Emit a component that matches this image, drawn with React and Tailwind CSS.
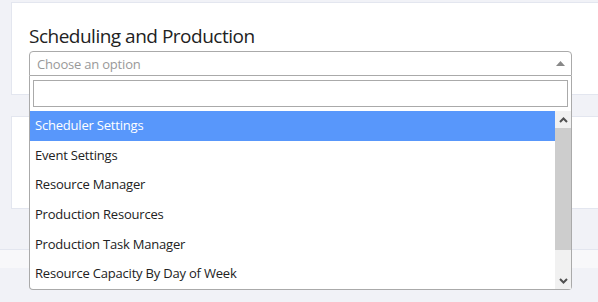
import React from "react";

const options = [
  "Scheduler Settings",
  "Event Settings",
  "Resource Manager",
  "Production Resources",
  "Production Task Manager",
  "Resource Capacity By Day of Week",
];

export default function App() {
  return (
    <div className="relative w-[598px] h-[302px] overflow-hidden bg-[#f1f2f7] font-['Open_Sans',sans-serif]">
      <div className="pt-[2px] pl-[11px] w-[620px]">
        <div className="h-[93px] bg-white border border-[#e3e6ef] pl-[17px] pt-[19px]">
          <h1 className="text-[19px] leading-[28px] text-[#222] tracking-[-0.5px]">Scheduling and Production</h1>
          <div className="mt-[1px] w-[543px] h-[25px] border border-[#aaa] rounded-t-[4px] flex items-center justify-between pl-[7px] pr-[6px]">
            <span className="text-[13px] text-[#999] tracking-[-0.2px] pt-[2px]">Choose an option</span>
            <svg width="9" height="5" viewBox="0 0 9 5"><path d="M0 5 L4.5 0 L9 5 Z" fill="#888" /></svg>
          </div>
        </div>
        <div className="mt-[21px] h-[93px] bg-white border border-[#e3e6ef]"></div>
      </div>
      <div className="mt-[40px] h-[19px] bg-[#f8f8fa] border-t border-[#e3e6ef]"></div>

      <div className="absolute left-[29px] top-[76px] w-[543px] bg-white border border-t-0 border-[#aaa] rounded-b-[4px]">
        <div className="px-[3px] pt-[4px] pb-[4px]">
          <div className="h-[27px] border border-[#aaa] bg-white"></div>
        </div>
        <div className="flex h-[178px]">
          <div className="w-[525px]">
            {options.map((o, i) => (
              <div
                key={o}
                className={
                  i === 0
                    ? "h-[29.67px] flex items-center pl-[5px] text-[13px] tracking-[-0.2px] bg-[#5897fb] text-white"
                    : "h-[29.67px] flex items-center pl-[5px] text-[13px] tracking-[-0.2px] text-[#222]"
                }
              >
                {o}
              </div>
            ))}
          </div>
          <div className="w-[16px] flex flex-col bg-[#f1f1f1]">
            <div className="h-[17px] flex items-center justify-center">
              <svg width="9" height="6" viewBox="0 0 9 6"><path d="M1 5 L4.5 1.5 L8 5" stroke="#505050" strokeWidth="2" fill="none" /></svg>
            </div>
            <div className="h-[122px] bg-[#cdcdcd]"></div>
            <div className="flex-1"></div>
            <div className="h-[17px] flex items-center justify-center">
              <svg width="9" height="6" viewBox="0 0 9 6"><path d="M1 1 L4.5 4.5 L8 1" stroke="#505050" strokeWidth="2" fill="none" /></svg>
            </div>
          </div>
        </div>
      </div>
    </div>
  );
}
